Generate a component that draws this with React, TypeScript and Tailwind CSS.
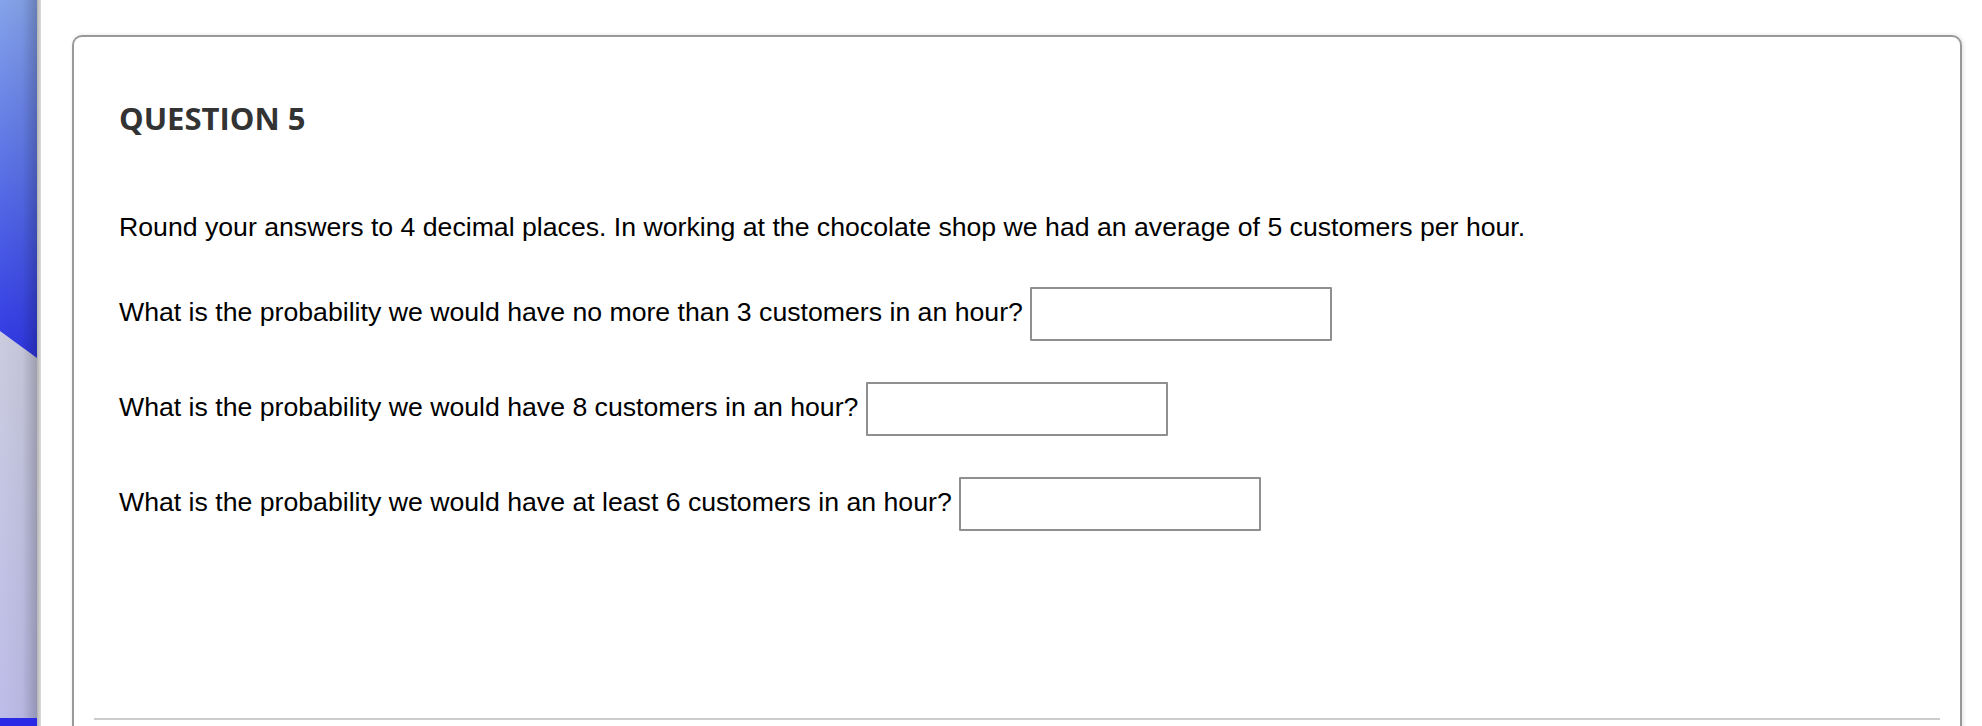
import React from 'react';

const questions = [
  'What is the probability we would have no more than 3 customers in an hour?',
  'What is the probability we would have 8 customers in an hour?',
  'What is the probability we would have at least 6 customers in an hour?',
];

// slice of desktop wallpaper peeking out at the left edge
const WallpaperStrip: React.FC = () => (
  <svg width="37" height="726" viewBox="0 0 37 726" className="block shrink-0">
    <defs>
      <linearGradient id="blueV" x1="0" y1="0" x2="0" y2="1">
        <stop offset="0" stopColor="#85a3ea" />
        <stop offset="0.45" stopColor="#5c74e6" />
        <stop offset="1" stopColor="#2e36e4" />
      </linearGradient>
      <linearGradient id="greyV" x1="0" y1="0" x2="0" y2="1">
        <stop offset="0" stopColor="#d4d6dc" />
        <stop offset="0.5" stopColor="#cacbe0" />
        <stop offset="1" stopColor="#bdbdea" />
      </linearGradient>
      <linearGradient id="shadeH" x1="0" y1="0" x2="1" y2="0">
        <stop offset="0" stopColor="#000" stopOpacity="0" />
        <stop offset="0.6" stopColor="#000" stopOpacity="0.04" />
        <stop offset="1" stopColor="#000" stopOpacity="0.22" />
      </linearGradient>
    </defs>
    <rect x="0" y="0" width="37" height="726" fill="url(#greyV)" />
    <polygon points="0,0 37,0 37,358 0,331" fill="url(#blueV)" />
    <rect x="0" y="718" width="37" height="8" fill="#2a2ae6" />
    <rect x="0" y="0" width="37" height="718" fill="url(#shadeH)" />
  </svg>
);

export default function App() {
  return (
    <div className="flex h-[726px] w-[1982px] overflow-hidden bg-white">
      <WallpaperStrip />
      <div className="w-[4px] shrink-0 bg-gradient-to-r from-[#b4b4b4] to-[#dcdcdc]" />

      <div className="ml-[31px] mr-[20px] mt-[35px] flex-1">
        <div className="h-[760px] rounded-t-[10px] border-2 border-b-0 border-[#999999] bg-white shadow-[1px_0_4px_rgba(0,0,0,0.12)]">
          <div className="px-[45px] pt-[61px]">
            <h2
              className="text-[31px] font-bold leading-[40px] text-[#333333]"
              style={{ fontFamily: '"Open Sans", "Noto Sans", sans-serif' }}
            >
              QUESTION 5
            </h2>

            <div
              className="text-[26.67px] leading-[32px] text-black"
              style={{ fontFamily: '"Liberation Sans", Arial, sans-serif' }}
            >
              <p className="mt-[73px]">
                Round your answers to 4 decimal places. In working at the chocolate shop we had an average of 5
                customers per hour.
              </p>

              {questions.map((q, i) => (
                <p key={i} className={i === 0 ? 'mt-[44px]' : 'mt-[41px]'}>
                  {q}{' '}
                  <input
                    type="text"
                    className="inline-block h-[54px] w-[302px] rounded-[1px] border-2 border-[#8f8f8f] bg-white align-middle outline-none"
                  />
                </p>
              ))}
            </div>
          </div>

          <div className="mx-[20px] mt-[187px] h-[2px] bg-[#cccccc]" />
        </div>
      </div>
    </div>
  );
}
